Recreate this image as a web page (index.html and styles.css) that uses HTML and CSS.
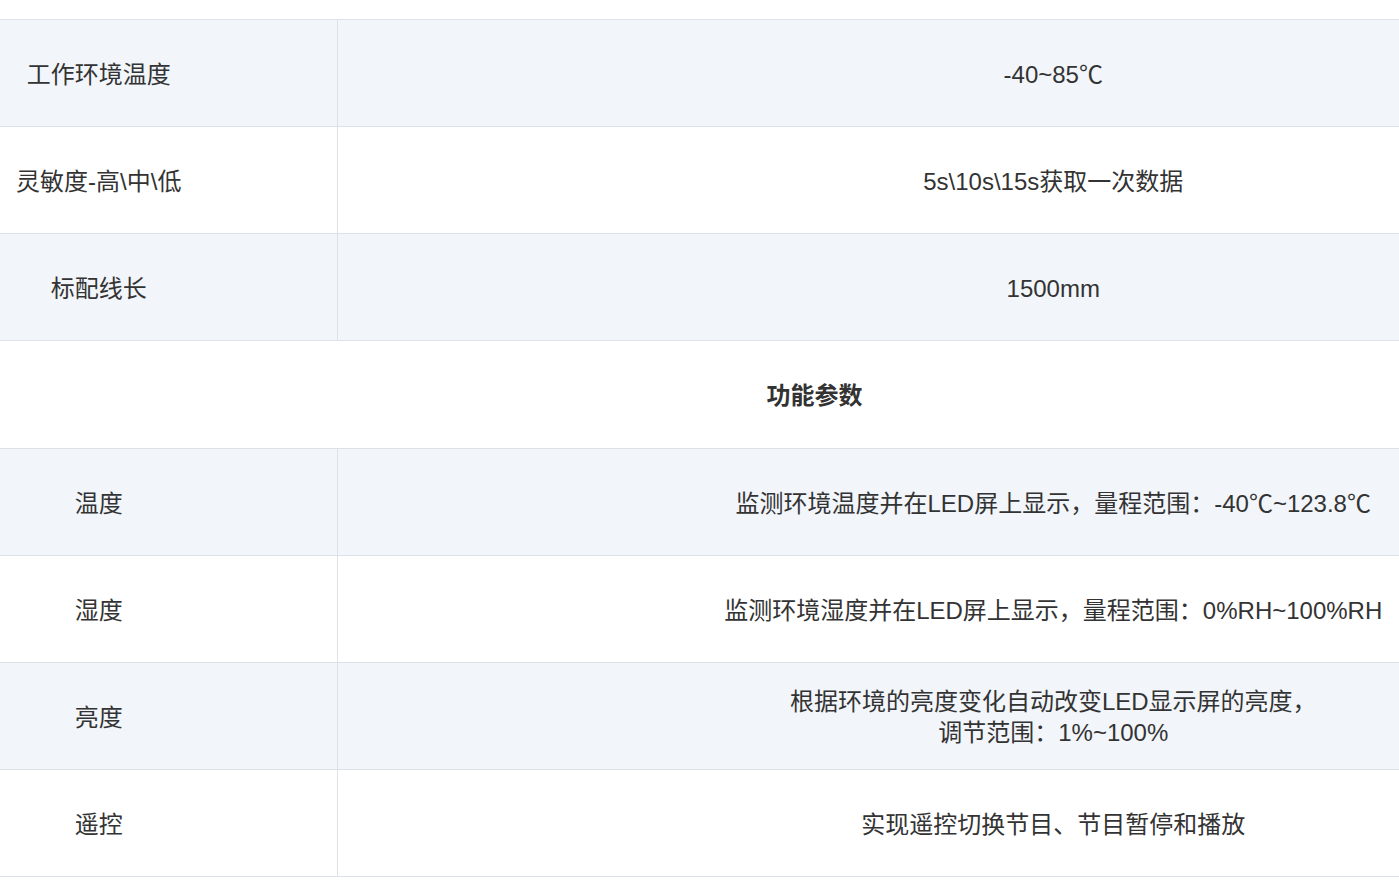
FILE: index.html
```html
<!DOCTYPE html>
<html lang="zh-CN">
<head>
<meta charset="utf-8">
<title>参数</title>
<link rel="stylesheet" href="styles.css">
</head>
<body>
<div class="wrap">
  <table class="spec">
    <colgroup>
      <col class="col-name">
      <col class="col-value">
    </colgroup>
    <tbody>
      <tr class="alt"><td class="name">工作环境温度</td><td class="value">-40~85℃</td></tr>
      <tr><td class="name">灵敏度-高\中\低</td><td class="value">5s\10s\15s获取一次数据</td></tr>
      <tr class="alt"><td class="name">标配线长</td><td class="value">1500mm</td></tr>
      <tr class="head"><td class="title" colspan="2">功能参数</td></tr>
      <tr class="alt"><td class="name">温度</td><td class="value">监测环境温度并在LED屏上显示，量程范围：-40℃~123.8℃</td></tr>
      <tr><td class="name">湿度</td><td class="value">监测环境湿度并在LED屏上显示，量程范围：0%RH~100%RH</td></tr>
      <tr class="alt"><td class="name">亮度</td><td class="value multi">根据环境的亮度变化自动改变LED显示屏的亮度，<br>调节范围：1%~100%</td></tr>
      <tr><td class="name">遥控</td><td class="value">实现遥控切换节目、节目暂停和播放</td></tr>
    </tbody>
  </table>
</div>
</body>
</html>
```

FILE: styles.css
```css
html, body {
  margin: 0;
  padding: 0;
  background: #ffffff;
  overflow: hidden;
}

.wrap {
  width: 100%;
  overflow: hidden;
  padding-top: 19px;
}

.spec {
  width: 1630px;
  border-collapse: collapse;
  table-layout: fixed;
  font-family: "Liberation Sans", "Noto Sans CJK SC", sans-serif;
  font-size: 24px;
  color: #333333;
}

.col-name { width: 337px; }

.spec td {
  height: 104px;
  padding: 2px 0 0 0;
  border: 1px solid #dde1ea;
  vertical-align: middle;
  text-align: center;
  line-height: 31px;
  white-space: nowrap;
}

.spec tr.alt td {
  background: #f2f5fa;
}

.spec tr.head td {
  height: 105px;
}

.spec td.name {
  padding-right: 139px;
  border-left: none;
}

.spec td.value {
  padding-left: 140px;
}

.spec td.title {
  font-weight: bold;
  border-left: none;
}
```
